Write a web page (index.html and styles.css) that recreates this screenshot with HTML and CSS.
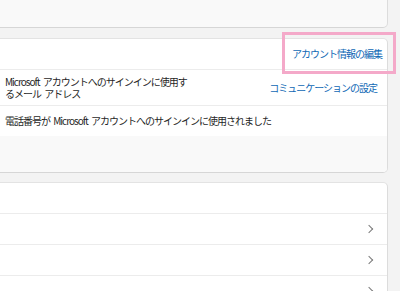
FILE: index.html
```html
<!DOCTYPE html>
<html lang="ja">
<head>
    <meta charset="UTF-8">
    <meta name="viewport" content="width=device-width, initial-scale=1.0">
    <title>アカウント情報</title>
    <link rel="stylesheet" href="styles.css">
</head>
<body>
    <div class="page">
        <div class="card card-top"></div>

        <div class="card">
            <div class="row row-head">
                <a class="link" href="#">アカウント情報の編集</a>
            </div>
            <div class="row row-mail">
                <p class="text text-wrap">Microsoft アカウントへのサインインに使用するメール アドレス</p>
                <a class="link link-comm" href="#">コミュニケーションの設定</a>
            </div>
            <div class="row row-phone">
                <p class="text">電話番号が Microsoft アカウントへのサインインに使用されました</p>
            </div>
            <div class="card-foot"></div>
        </div>

        <div class="card card-list">
            <div class="list-row"></div>
            <div class="list-row"><span class="chevron"></span></div>
            <div class="list-row"><span class="chevron"></span></div>
            <div class="list-row"><span class="chevron"></span></div>
        </div>

        <!-- highlight box -->
        <div class="highlight"></div>
    </div>
</body>
</html>
```

FILE: styles.css
```css
/* General */
* {
    margin: 0;
    padding: 0;
    box-sizing: border-box;
}

body {
    background: #f3f3f3;
    font-family: "Noto Sans CJK JP", "Noto Sans", sans-serif;
    font-size: 10px;
    letter-spacing: -1px;
    word-spacing: 2px;
    color: #1f1f1f;
    overflow: hidden;
}

.page {
    position: relative;
    width: 408px;
    margin-left: -20px;
}

/* Cards */
.card {
    background: #ffffff;
    border: 1px solid #e3e3e3;
    border-right-color: #dcdcdc;
    border-bottom-color: #d6d6d6;
    border-radius: 5px;
    overflow: hidden;
    margin-top: 10px;
}

.card-top {
    margin-top: 0;
    height: 28px;
    border-top: none;
    border-radius: 0 0 5px 5px;
    background: #f9f9f9;
}

/* Account rows */
.row {
    display: flex;
    align-items: center;
    justify-content: space-between;
    padding: 0 10px 0 24px;
    border-bottom: 1px solid #ececec;
}

.row-head {
    height: 31px;
    justify-content: flex-end;
    padding-right: 5px;
}

.row-mail {
    height: 36px;
}

.row-phone {
    height: 30px;
    border-bottom: none;
}

.text {
    line-height: 12px;
}

.text-wrap {
    max-width: 188px;
}

.link {
    color: #0f68b5;
    text-decoration: none;
    line-height: 12px;
}

.card-foot {
    height: 36px;
    background: #f9f9f9;
}

/* List card */
.card-list {
    margin-top: 9px;
    border-bottom: none;
    border-radius: 5px 5px 0 0;
}

.list-row {
    height: 31px;
    display: flex;
    align-items: center;
    justify-content: flex-end;
    padding-right: 15px;
    border-bottom: 1px solid #ececec;
}

.chevron {
    width: 6px;
    height: 6px;
    border-top: 1px solid #7a7a7a;
    border-right: 1px solid #7a7a7a;
    transform: rotate(45deg);
}

/* Highlight */
.highlight {
    position: absolute;
    left: 302px;
    top: 32px;
    width: 114px;
    height: 42px;
    border: 3px solid #f4a9c9;
}
```
